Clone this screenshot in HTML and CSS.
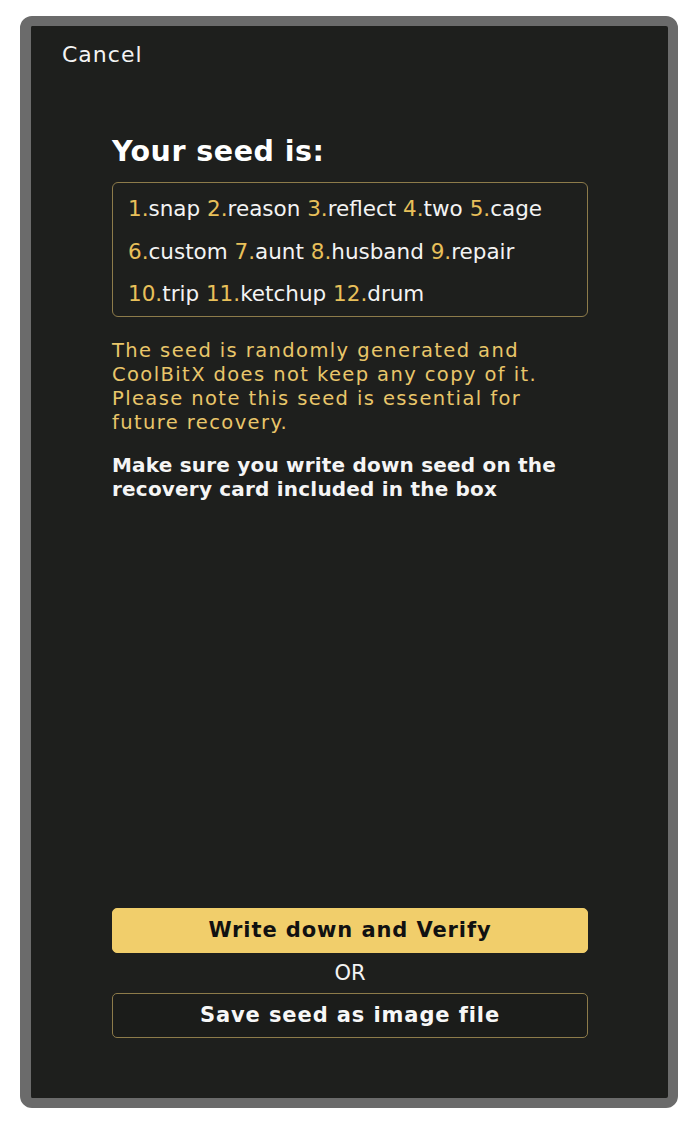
FILE: index.html
```html
<!DOCTYPE html>
<html lang="en">
<head>
<meta charset="utf-8">
<title>Your seed</title>
<link rel="stylesheet" href="styles.css">
</head>
<body>
<div class="device">
  <div class="screen">
    <div class="cancel">Cancel</div>
    <div class="content">
      <h1 class="title">Your seed is:</h1>
      <div class="seed-box">
        <div class="seed-line"><span class="num">1.</span>snap <span class="num">2.</span>reason <span class="num">3.</span>reflect <span class="num">4.</span>two <span class="num">5.</span>cage</div>
        <div class="seed-line"><span class="num">6.</span>custom <span class="num">7.</span>aunt <span class="num">8.</span>husband <span class="num">9.</span>repair</div>
        <div class="seed-line"><span class="num">10.</span>trip <span class="num">11.</span>ketchup <span class="num">12.</span>drum</div>
      </div>
      <p class="note">The seed is randomly generated and<br>CoolBitX does not keep any copy of it.<br>Please note this seed is essential for<br>future recovery.</p>
      <p class="warn">Make sure you write down seed on the<br>recovery card included in the box</p>
      <div class="actions">
        <button class="btn btn-primary" type="button">Write down and Verify</button>
        <div class="or">OR</div>
        <button class="btn btn-outline" type="button">Save seed as image file</button>
      </div>
    </div>
  </div>
</div>
</body>
</html>
```
FILE: styles.css
```css
* { box-sizing: border-box; }
html, body { margin: 0; padding: 0; background: #ffffff; }
body { font-family: "DejaVu Sans", "Liberation Sans", sans-serif; }

.device {
  margin: 16px 0 0 20px;
  width: 658px;
  height: 1092px;
  border: 10px solid #6b6b6b;
  border-left-width: 11px;
  border-radius: 12px;
  background: #1e1f1d;
}

.screen {
  height: 100%;
  display: flex;
  flex-direction: column;
  color: #f3f3f3;
}

.cancel {
  padding: 18px 0 0 31px;
  font-size: 22px;
  line-height: 22px;
  letter-spacing: 1px;
  color: #f3f3f3;
}

.content {
  flex: 1;
  display: flex;
  flex-direction: column;
  padding: 0 80px 60px 81px;
}

.title {
  margin: 72px 0 0 0;
  font-size: 28.5px;
  line-height: 28px;
  font-weight: bold;
  letter-spacing: 0.5px;
  color: #ffffff;
}

.seed-box {
  margin-top: 16px;
  height: 135px;
  border: 1px solid #8d7b4a;
  border-radius: 6px;
  padding: 5px 10px 0 15px;
}

.seed-line {
  font-size: 21.5px;
  line-height: 42.5px;
  color: #f3f3f3;
  white-space: nowrap;
}

.num { color: #e8c05a; }

.note {
  margin: 22px 0 0 0;
  font-size: 19.5px;
  line-height: 24px;
  letter-spacing: 1.4px;
  color: #e9c66a;
}

.warn {
  margin: 18px 0 0 0;
  font-size: 20px;
  line-height: 24px;
  font-weight: bold;
  letter-spacing: 0.2px;
  color: #f5f5f5;
}

.actions {
  margin-top: auto;
  display: flex;
  flex-direction: column;
}

.btn {
  display: block;
  width: 100%;
  height: 45px;
  margin: 0;
  padding: 0;
  border-radius: 5px;
  font-family: "DejaVu Sans", "Liberation Sans", sans-serif;
  font-size: 21px;
  line-height: 43px;
  font-weight: bold;
  letter-spacing: 0.9px;
  text-align: center;
  cursor: pointer;
}

.btn-primary {
  background: #f1ce6b;
  border: 1px solid #f1ce6b;
  color: #111111;
}

.btn-outline {
  background: #1b1c1a;
  border: 1px solid #8d7b4a;
  color: #f7f7f7;
}

.or {
  height: 40px;
  padding-top: 1px;
  font-size: 21px;
  line-height: 39px;
  text-align: center;
  color: #f3f3f3;
}
```
